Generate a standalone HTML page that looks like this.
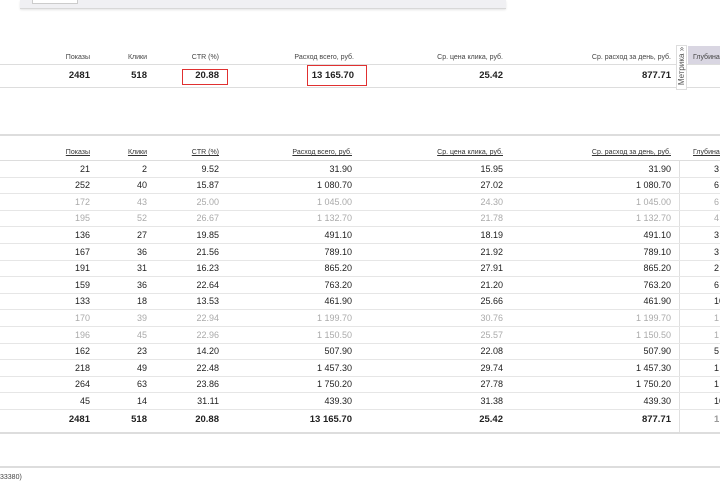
<!DOCTYPE html>
<html><head><meta charset="utf-8"><style>
body{margin:0;width:720px;height:480px;overflow:hidden;background:#fff;font-family:"Liberation Sans",Arial,sans-serif;position:relative;color:#222}
.a{position:absolute}
.t{position:absolute;text-align:right;white-space:nowrap;line-height:12px}
.h{font-size:7px;color:#444}
.hu{font-size:7px;color:#333;text-decoration:underline}
.v{font-size:9px;color:#222}
.g{color:#aaa}
.b{font-size:9.5px;font-weight:bold;color:#222}
.ln{position:absolute;left:0;height:1px;background:#e6e6e6}
</style></head><body>
<div class="a" style="left:20px;top:0;width:486px;height:8px;background:#f0f0f3;border-bottom:1px solid #d8d8d8;box-shadow:0 1px 2px #e5e5e5"></div>
<div class="a" style="left:32px;top:-1px;width:44px;height:3px;background:#fff;border:1px solid #ccc"></div>

<div class="a" style="left:688px;top:46px;width:32px;height:18px;background:#d9d6e2"></div>
<div class="t h" style="right:630px;top:52px">Показы</div>
<div class="t h" style="right:573px;top:52px">Клики</div>
<div class="t h" style="right:501px;top:52px">CTR (%)</div>
<div class="t h" style="right:366px;top:52px">Расход всего, руб.</div>
<div class="t h" style="right:217px;top:52px">Ср. цена клика, руб.</div>
<div class="t h" style="right:49px;top:52px">Ср. расход за день, руб.</div>
<div class="t h" style="left:693px;top:52px;text-align:left">Глубина (</div>
<div class="ln" style="top:64px;width:720px;background:#ddd"></div>
<div class="ln" style="top:87px;width:720px;background:#ddd"></div>
<div class="t b" style="right:630px;top:70px">2481</div>
<div class="t b" style="right:573px;top:70px">518</div>
<div class="t b" style="right:501px;top:70px">20.88</div>
<div class="t b" style="right:366px;top:70px">13 165.70</div>
<div class="t b" style="right:217px;top:70px">25.42</div>
<div class="t b" style="right:49px;top:70px">877.71</div>
<div class="a" style="left:182px;top:69px;width:46px;height:16px;border:1px solid #e03030;box-sizing:border-box"></div>
<div class="a" style="left:307px;top:65px;width:60px;height:21px;border:1px solid #e03030;box-sizing:border-box"></div>
<div class="a" style="left:676px;top:45px;width:11px;height:45px;background:#fff;border:1px solid #ddd;box-sizing:border-box"></div>
<div class="a" style="left:676px;top:88px;transform:rotate(-90deg);transform-origin:0 0;font-size:8px;color:#555;white-space:nowrap;width:44px;line-height:11px;text-align:center">Метрика »</div>

<div class="ln" style="top:134px;width:720px;height:2px;background:#ddd"></div>
<div class="t hu" style="right:630px;top:147px">Показы</div>
<div class="t hu" style="right:573px;top:147px">Клики</div>
<div class="t hu" style="right:501px;top:147px">CTR (%)</div>
<div class="t hu" style="right:368px;top:147px">Расход всего, руб.</div>
<div class="t hu" style="right:217px;top:147px">Ср. цена клика, руб.</div>
<div class="t hu" style="right:49px;top:147px">Ср. расход за день, руб.</div>
<div class="t hu" style="left:693px;top:147px;text-align:left">Глубина (</div>
<div class="a" style="left:679px;top:160px;width:1px;height:272px;background:#e0e0e0"></div>
<div id="rows"></div>
<div class="ln" style="top:432px;width:720px;height:2px;background:#ddd"></div>
<div class="ln" style="top:466px;width:720px;height:2px;background:#ddd"></div>
<div class="t" style="left:0;top:472px;font-size:7px;color:#444;text-align:left">33380)</div>
<script>
var d=[["21","2","9.52","31.90","15.95","31.90","3",0],["252","40","15.87","1 080.70","27.02","1 080.70","6",0],["172","43","25.00","1 045.00","24.30","1 045.00","6",1],["195","52","26.67","1 132.70","21.78","1 132.70","4",1],["136","27","19.85","491.10","18.19","491.10","3",0],["167","36","21.56","789.10","21.92","789.10","3",0],["191","31","16.23","865.20","27.91","865.20","2",0],["159","36","22.64","763.20","21.20","763.20","6",0],["133","18","13.53","461.90","25.66","461.90","10",0],["170","39","22.94","1 199.70","30.76","1 199.70","1",1],["196","45","22.96","1 150.50","25.57","1 150.50","1",1],["162","23","14.20","507.90","22.08","507.90","5",0],["218","49","22.48","1 457.30","29.74","1 457.30","1",0],["264","63","23.86","1 750.20","27.78","1 750.20","1",0],["45","14","31.11","439.30","31.38","439.30","10",0]];
var R=[630,573,501,368,217,49],h="",y=160;
h+='<div class="ln" style="top:160px;width:720px;background:#ddd"></div>';
d.forEach(function(r){for(var i=0;i<6;i++)h+='<div class="t v'+(r[7]?' g':'')+'" style="right:'+R[i]+'px;top:'+(y+2.5)+'px">'+r[i]+'</div>';
h+='<div class="t v'+(r[7]?' g':'')+'" style="left:714px;top:'+(y+2.5)+'px;text-align:left">'+r[6]+'</div>';
y+=16.6;h+='<div class="ln" style="top:'+Math.round(y)+'px;width:720px"></div>';});
var T=["2481","518","20.88","13 165.70","25.42","877.71"];
for(var i=0;i<6;i++)h+='<div class="t b" style="right:'+R[i]+'px;top:414px">'+T[i]+'</div>';
h+='<div class="t b" style="left:714px;top:414px;color:#999;text-align:left">1</div>';
document.getElementById("rows").innerHTML=h;
</script>
</body></html>
